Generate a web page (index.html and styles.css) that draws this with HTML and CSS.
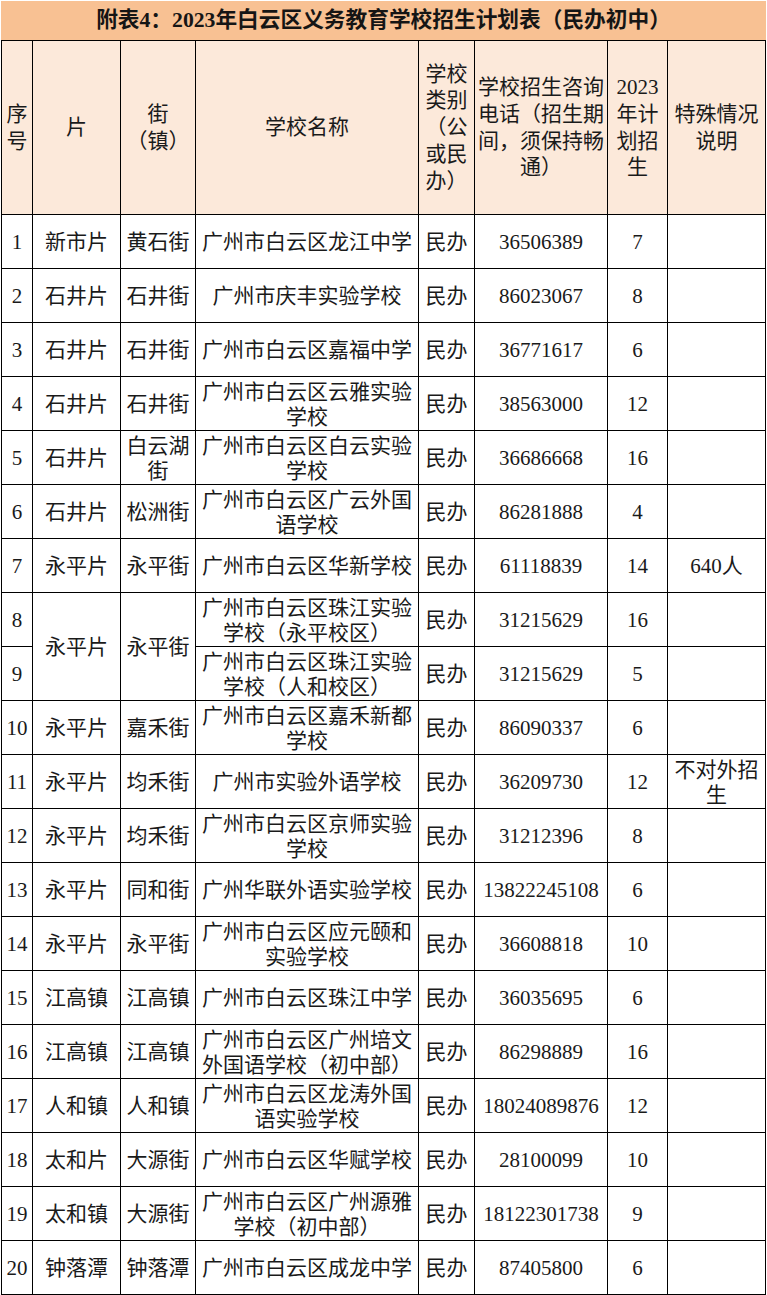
FILE: index.html
```html
<!DOCTYPE html>
<html lang="zh-CN">
<head>
<meta charset="utf-8">
<title>附表4</title>
<link rel="stylesheet" href="styles.css">
</head>
<body>
<div class="sheet">
  <div class="title">附表4：2023年白云区义务教育学校招生计划表（民办初中）</div>
  <table class="plan">
    <colgroup>
      <col class="c-no"><col class="c-area"><col class="c-street"><col class="c-name"><col class="c-type"><col class="c-phone"><col class="c-num"><col class="c-note">
    </colgroup>
    <thead>
      <tr class="head">
        <th>序号</th>
        <th>片</th>
        <th>街（镇）</th>
        <th>学校名称</th>
        <th>学校类别（公或民办）</th>
        <th>学校招生咨询电话（招生期间，须保持畅通）</th>
        <th>2023年计划招生</th>
        <th>特殊情况说明</th>
      </tr>
    </thead>
    <tbody>
      <tr><td>1</td><td>新市片</td><td>黄石街</td><td>广州市白云区龙江中学</td><td>民办</td><td>36506389</td><td>7</td><td></td></tr>
      <tr><td>2</td><td>石井片</td><td>石井街</td><td>广州市庆丰实验学校</td><td>民办</td><td>86023067</td><td>8</td><td></td></tr>
      <tr><td>3</td><td>石井片</td><td>石井街</td><td>广州市白云区嘉福中学</td><td>民办</td><td>36771617</td><td>6</td><td></td></tr>
      <tr><td>4</td><td>石井片</td><td>石井街</td><td>广州市白云区云雅实验学校</td><td>民办</td><td>38563000</td><td>12</td><td></td></tr>
      <tr><td>5</td><td>石井片</td><td>白云湖街</td><td>广州市白云区白云实验学校</td><td>民办</td><td>36686668</td><td>16</td><td></td></tr>
      <tr><td>6</td><td>石井片</td><td>松洲街</td><td>广州市白云区广云外国语学校</td><td>民办</td><td>86281888</td><td>4</td><td></td></tr>
      <tr><td>7</td><td>永平片</td><td>永平街</td><td>广州市白云区华新学校</td><td>民办</td><td>61118839</td><td>14</td><td>640人</td></tr>
      <tr><td>8</td><td rowspan="2">永平片</td><td rowspan="2">永平街</td><td>广州市白云区珠江实验学校（永平校区）</td><td>民办</td><td>31215629</td><td>16</td><td></td></tr>
      <tr><td>9</td><td>广州市白云区珠江实验学校（人和校区）</td><td>民办</td><td>31215629</td><td>5</td><td></td></tr>
      <tr><td>10</td><td>永平片</td><td>嘉禾街</td><td>广州市白云区嘉禾新都学校</td><td>民办</td><td>86090337</td><td>6</td><td></td></tr>
      <tr><td>11</td><td>永平片</td><td>均禾街</td><td>广州市实验外语学校</td><td>民办</td><td>36209730</td><td>12</td><td>不对外招生</td></tr>
      <tr><td>12</td><td>永平片</td><td>均禾街</td><td>广州市白云区京师实验学校</td><td>民办</td><td>31212396</td><td>8</td><td></td></tr>
      <tr><td>13</td><td>永平片</td><td>同和街</td><td>广州华联外语实验学校</td><td>民办</td><td>13822245108</td><td>6</td><td></td></tr>
      <tr><td>14</td><td>永平片</td><td>永平街</td><td>广州市白云区应元颐和实验学校</td><td>民办</td><td>36608818</td><td>10</td><td></td></tr>
      <tr><td>15</td><td>江高镇</td><td>江高镇</td><td>广州市白云区珠江中学</td><td>民办</td><td>36035695</td><td>6</td><td></td></tr>
      <tr><td>16</td><td>江高镇</td><td>江高镇</td><td>广州市白云区广州培文外国语学校（初中部）</td><td>民办</td><td>86298889</td><td>16</td><td></td></tr>
      <tr><td>17</td><td>人和镇</td><td>人和镇</td><td>广州市白云区龙涛外国语实验学校</td><td>民办</td><td>18024089876</td><td>12</td><td></td></tr>
      <tr><td>18</td><td>太和片</td><td>大源街</td><td>广州市白云区华赋学校</td><td>民办</td><td>28100099</td><td>10</td><td></td></tr>
      <tr><td>19</td><td>太和镇</td><td>大源街</td><td>广州市白云区广州源雅学校（初中部）</td><td>民办</td><td>18122301738</td><td>9</td><td></td></tr>
      <tr><td>20</td><td>钟落潭</td><td>钟落潭</td><td>广州市白云区成龙中学</td><td>民办</td><td>87405800</td><td>6</td><td></td></tr>
    </tbody>
  </table>
</div>
</body>
</html>
```
FILE: styles.css
```css
html, body {
  margin: 0;
  padding: 0;
  background: #ffffff;
}
body {
  font-family: "Liberation Serif", "Noto Sans CJK SC", serif;
  color: #1a1a1a;
}
.sheet {
  padding: 1px 0 0 1px;
  width: 766px;
}
.title {
  height: 39px;
  width: 765px;
  background: #f8c193;
  font-weight: bold;
  font-size: 21.7px;
  line-height: 39px;
  text-align: center;
  color: #151515;
  white-space: nowrap;
}
.plan {
  border-collapse: collapse;
  table-layout: fixed;
  width: 765px;
  font-size: 21px;
  line-height: 25px;
}
.c-no { width: 31px; }
.c-area { width: 88px; }
.c-street { width: 75px; }
.c-name { width: 223px; }
.c-type { width: 56px; }
.c-phone { width: 133px; }
.c-num { width: 60px; }
.c-note { width: 98px; }
.plan th, .plan td {
  border: 1px solid #000;
  padding: 0 2px;
  text-align: center;
  vertical-align: middle;
  font-weight: normal;
  overflow: hidden;
}
.plan td {
  padding-top: 2px;
}
.plan th:first-child, .plan td:first-child {
  padding-left: 0;
  padding-right: 0;
}
.head th {
  background: #fce9da;
  height: 173px;
  line-height: 26.7px;
}
.plan tbody tr {
  height: 54px;
}
```
